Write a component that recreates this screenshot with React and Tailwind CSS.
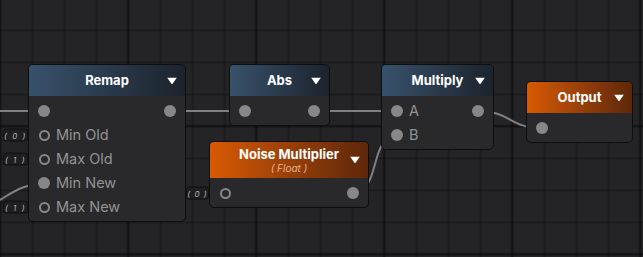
import React from "react"

const BLUE = "bg-linear-to-r from-[#38526c] to-[#1c232d]"
const ORANGE = "bg-linear-to-r from-[#d85a00] to-[#5e2709]"

function Pin({ hollow }) {
    return (
        <span className="w-3 h-3 flex items-center justify-center shrink-0">
            {hollow ? (
                <span className="w-[11px] h-[11px] rounded-full border-2 border-[#878787]" />
            ) : (
                <span className="w-3 h-3 rounded-full bg-[#878787]" />
            )}
        </span>
    )
}

function DefaultBox({ text, wide }) {
    return (
        <div
            className={`absolute top-1/2 -translate-y-1/2 h-[13px] flex items-center justify-center whitespace-nowrap rounded-[3px] border border-[#0f0f10] bg-[#1f1f22] text-[8px] italic text-[#b4b4b4] ${
                wide ? "-left-[26px] w-[25px] tracking-[1.5px]" : "-left-[24px] w-[23px] tracking-[1px]"
            }`}
        >
            {text}
        </div>
    )
}

function Row({ label, input, hollow, output, box, wideBox }) {
    return (
        <div className="relative h-6 flex items-center px-[9px]">
            {box && <DefaultBox text={box} wide={wideBox} />}
            {input && <Pin hollow={hollow} />}
            {label && <span className="ml-[6px] text-[14.5px] text-[#939393] leading-none">{label}</span>}
            {output && (
                <span className="ml-auto">
                    <Pin />
                </span>
            )}
        </div>
    )
}

function Node({ title, subtitle, color, className, children }) {
    return (
        <div className={`absolute rounded-[5px] border border-[#0e0e0f] bg-[#29292c] ${className}`}>
            <div
                className={`relative rounded-t-[4px] flex flex-col items-center justify-center text-white ${color} ${
                    subtitle ? "h-[36px]" : "h-[31px]"
                }`}
            >
                <span className="text-[13px] font-bold leading-[15px]">{title}</span>
                {subtitle && <span className="text-[10px] italic leading-[12px] text-[#e9b48f]">{subtitle}</span>}
                <svg className="absolute right-[8px] top-1/2 -translate-y-1/2" width="10" height="7" viewBox="0 0 10 7">
                    <polygon points="0,0 10,0 5,7" fill="#fff" />
                </svg>
            </div>
            <div className="pt-[3px] pb-[2px]">{children}</div>
        </div>
    )
}

export default function App() {
    return (
        <div
            className="relative w-[643px] h-[257px] overflow-hidden bg-[#242427] [background-image:linear-gradient(90deg,rgba(0,0,0,0.1)_0_1px,rgba(0,0,0,0.22)_1px_2px,rgba(0,0,0,0.1)_2px_3px,transparent_3px),linear-gradient(180deg,rgba(0,0,0,0.1)_0_1px,rgba(0,0,0,0.22)_1px_2px,rgba(0,0,0,0.1)_2px_3px,transparent_3px),linear-gradient(90deg,rgba(0,0,0,0.12)_0_1px,rgba(0,0,0,0.28)_1px_3px,rgba(0,0,0,0.12)_3px_4px,transparent_4px),linear-gradient(180deg,rgba(0,0,0,0.12)_0_1px,rgba(0,0,0,0.28)_1px_3px,rgba(0,0,0,0.12)_3px_4px,transparent_4px)] [background-size:32px_32px,32px_32px,128px_128px,128px_128px] [background-position:31px_0,0_29px,126px_0,0_124px]"
            style={{ fontFamily: "Inter, 'Noto Sans', sans-serif" }}
        >
            {/* wires sit under the nodes */}
            <svg className="absolute inset-0" width="643" height="257" fill="none" stroke="#808080" strokeWidth="2">
                <path d="M -2 111 L 44 111" />
                <path d="M 169 111 L 245 111" />
                <path d="M 313 111 L 397 111" />
                <path d="M 477 111 C 512 111, 508 128, 542 128" />
                <path d="M 352 193 C 382 193, 368 136, 397 136" />
                <path d="M -30 212 C 5 205, 10 184, 44 184" />
            </svg>

            <Node title="Remap" color={BLUE} className="left-[28px] top-[64px] w-[158px]">
                <Row input output />
                <Row input hollow label="Min Old" box="( 0 )" wideBox />
                <Row input hollow label="Max Old" box="( 1 )" wideBox />
                <Row input label="Min New" />
                <Row input hollow label="Max New" box="( 1 )" wideBox />
            </Node>

            <Node title="Abs" color={BLUE} className="left-[229px] top-[64px] w-[101px]">
                <Row input output />
            </Node>

            <Node title="Multiply" color={BLUE} className="left-[381px] top-[64px] w-[113px]">
                <Row input label="A" output />
                <Row input label="B" />
            </Node>

            <Node title="Noise Multiplier" subtitle="( Float )" color={ORANGE} className="left-[209px] top-[141px] w-[160px]">
                <Row input hollow output box="( 0 )" />
            </Node>

            <Node title="Output" color={ORANGE} className="left-[526px] top-[81px] w-[107px]">
                <Row input />
            </Node>
        </div>
    )
}
